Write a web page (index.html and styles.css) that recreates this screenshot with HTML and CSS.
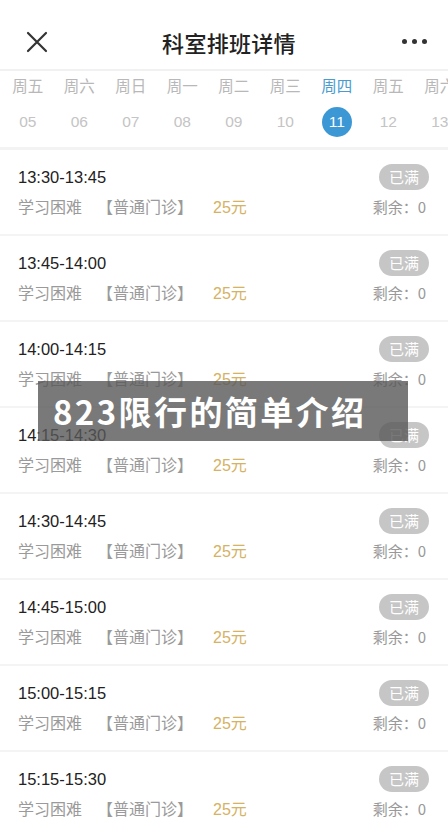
FILE: index.html
```html
<!DOCTYPE html>
<html lang="zh-CN">
<head>
    <meta charset="UTF-8">
    <meta name="viewport" content="width=device-width, initial-scale=1.0">
    <title>科室排班详情</title>
    <link rel="stylesheet" href="styles.css">
</head>
<body>
    <div class="page">
        <header class="topbar">
            <span class="close-btn">
                <svg width="22" height="22" viewBox="0 0 22 22">
                    <path d="M2 2 L20 20 M20 2 L2 20" stroke="#333" stroke-width="2.2" stroke-linecap="round" fill="none"/>
                </svg>
            </span>
            <h1 class="title">科室排班详情</h1>
            <span class="more-btn"><i></i><i></i><i></i></span>
        </header>

        <!-- week strip -->
        <div class="dates">
            <div class="day"><span class="wk">周五</span><span class="num">05</span></div>
            <div class="day"><span class="wk">周六</span><span class="num">06</span></div>
            <div class="day"><span class="wk">周日</span><span class="num">07</span></div>
            <div class="day"><span class="wk">周一</span><span class="num">08</span></div>
            <div class="day"><span class="wk">周二</span><span class="num">09</span></div>
            <div class="day"><span class="wk">周三</span><span class="num">10</span></div>
            <div class="day active"><span class="wk">周四</span><span class="num">11</span></div>
            <div class="day"><span class="wk">周五</span><span class="num">12</span></div>
            <div class="day"><span class="wk">周六</span><span class="num">13</span></div>
        </div>

        <!-- schedule list -->
        <div class="slots">
            <div class="slot">
                <div class="slot-top"><span class="time">13:30-13:45</span><span class="full">已满</span></div>
                <div class="slot-bottom"><span class="dept">学习困难</span><span class="kind">【普通门诊】</span><span class="price">25元</span><span class="left">剩余：0</span></div>
            </div>
            <div class="slot">
                <div class="slot-top"><span class="time">13:45-14:00</span><span class="full">已满</span></div>
                <div class="slot-bottom"><span class="dept">学习困难</span><span class="kind">【普通门诊】</span><span class="price">25元</span><span class="left">剩余：0</span></div>
            </div>
            <div class="slot">
                <div class="slot-top"><span class="time">14:00-14:15</span><span class="full">已满</span></div>
                <div class="slot-bottom"><span class="dept">学习困难</span><span class="kind">【普通门诊】</span><span class="price">25元</span><span class="left">剩余：0</span></div>
            </div>
            <div class="slot">
                <div class="slot-top"><span class="time">14:15-14:30</span><span class="full">已满</span></div>
                <div class="slot-bottom"><span class="dept">学习困难</span><span class="kind">【普通门诊】</span><span class="price">25元</span><span class="left">剩余：0</span></div>
            </div>
            <div class="slot">
                <div class="slot-top"><span class="time">14:30-14:45</span><span class="full">已满</span></div>
                <div class="slot-bottom"><span class="dept">学习困难</span><span class="kind">【普通门诊】</span><span class="price">25元</span><span class="left">剩余：0</span></div>
            </div>
            <div class="slot">
                <div class="slot-top"><span class="time">14:45-15:00</span><span class="full">已满</span></div>
                <div class="slot-bottom"><span class="dept">学习困难</span><span class="kind">【普通门诊】</span><span class="price">25元</span><span class="left">剩余：0</span></div>
            </div>
            <div class="slot">
                <div class="slot-top"><span class="time">15:00-15:15</span><span class="full">已满</span></div>
                <div class="slot-bottom"><span class="dept">学习困难</span><span class="kind">【普通门诊】</span><span class="price">25元</span><span class="left">剩余：0</span></div>
            </div>
            <div class="slot">
                <div class="slot-top"><span class="time">15:15-15:30</span><span class="full">已满</span></div>
                <div class="slot-bottom"><span class="dept">学习困难</span><span class="kind">【普通门诊】</span><span class="price">25元</span><span class="left">剩余：0</span></div>
            </div>
        </div>

        <div class="banner">823限行的简单介绍</div>
    </div>
</body>
</html>
```

FILE: styles.css
```css
/* Global styles */
body {
    margin: 0;
    padding: 0;
    background-color: #fff;
    font-family: "Liberation Sans", "Noto Sans CJK SC", sans-serif;
    color: #222;
    overflow: hidden;
}

.page {
    position: relative;
    width: 448px;
    height: 823px;
    overflow: hidden;
}

/* header */
.topbar {
    height: 55px;
    display: flex;
    align-items: center;
    justify-content: space-between;
    padding: 14px 21px 0 26px;
    border-bottom: 2px solid #f1f1f1;
}

.close-btn {
    display: flex;
    width: 22px;
    height: 22px;
    margin-top: 1px;
}

.title {
    margin: 0 0 0 8px;
    font-family: "Noto Sans CJK SC", sans-serif;
    font-size: 22px;
    font-weight: 500;
    color: #222;
    letter-spacing: 0.3px;
}

.more-btn {
    display: flex;
    gap: 5px;
}

.more-btn i {
    width: 5px;
    height: 5px;
    border-radius: 50%;
    background-color: #333;
}

/* week strip */
.dates {
    display: flex;
    padding: 4px 0 10px 2px;
    border-bottom: 3px solid #f3f3f3;
    overflow: hidden;
}

.day {
    flex: 0 0 51.5px;
    display: flex;
    flex-direction: column;
    align-items: center;
    gap: 12px;
}

.wk {
    font-family: "Noto Sans CJK SC", sans-serif;
    font-size: 15.5px;
    line-height: 20px;
    color: #b8b8b8;
}

.num {
    width: 30px;
    height: 30px;
    border-radius: 50%;
    display: flex;
    align-items: center;
    justify-content: center;
    font-size: 15.5px;
    color: #c4c4c4;
}

.day.active .wk {
    color: #4a9ccf;
}

.day.active .num {
    background-color: #3b98d5;
    color: #fff;
}

/* schedule rows */
.slot {
    padding: 14px 22px 16px 18px;
    border-bottom: 2px solid #f4f4f4;
}

.slot-top {
    height: 26px;
    display: flex;
    align-items: center;
    justify-content: space-between;
}

.time {
    font-size: 16.5px;
    color: #222;
}

.full {
    height: 26px;
    line-height: 26px;
    padding: 0 10px;
    border-radius: 13px;
    background-color: #c6c6c6;
    color: #fff;
    font-family: "Noto Sans CJK SC", sans-serif;
    font-size: 15px;
    margin-right: -3px;
}

.slot-bottom {
    height: 20px;
    margin-top: 6px;
    margin-bottom: 2px;
    display: flex;
    align-items: center;
    font-family: "Noto Sans CJK SC", sans-serif;
    font-size: 16px;
    color: #9a9a9a;
}

.kind {
    margin-left: 15px;
}

.price {
    margin-left: 20px;
    font-family: "Liberation Sans", "Noto Sans CJK SC", sans-serif;
    color: #d5b264;
}

.left {
    margin-left: auto;
    font-size: 15px;
    color: #999;
}

/* overlay caption */
.banner {
    position: absolute;
    left: 38px;
    top: 381px;
    width: 370px;
    height: 60px;
    box-sizing: border-box;
    padding-left: 15px;
    display: flex;
    align-items: center;
    background-color: rgba(88, 88, 88, 0.8);
    color: #fff;
    font-family: "Noto Sans CJK SC", sans-serif;
    font-size: 33px;
    font-weight: 700;
    letter-spacing: 2.4px;
}
```
